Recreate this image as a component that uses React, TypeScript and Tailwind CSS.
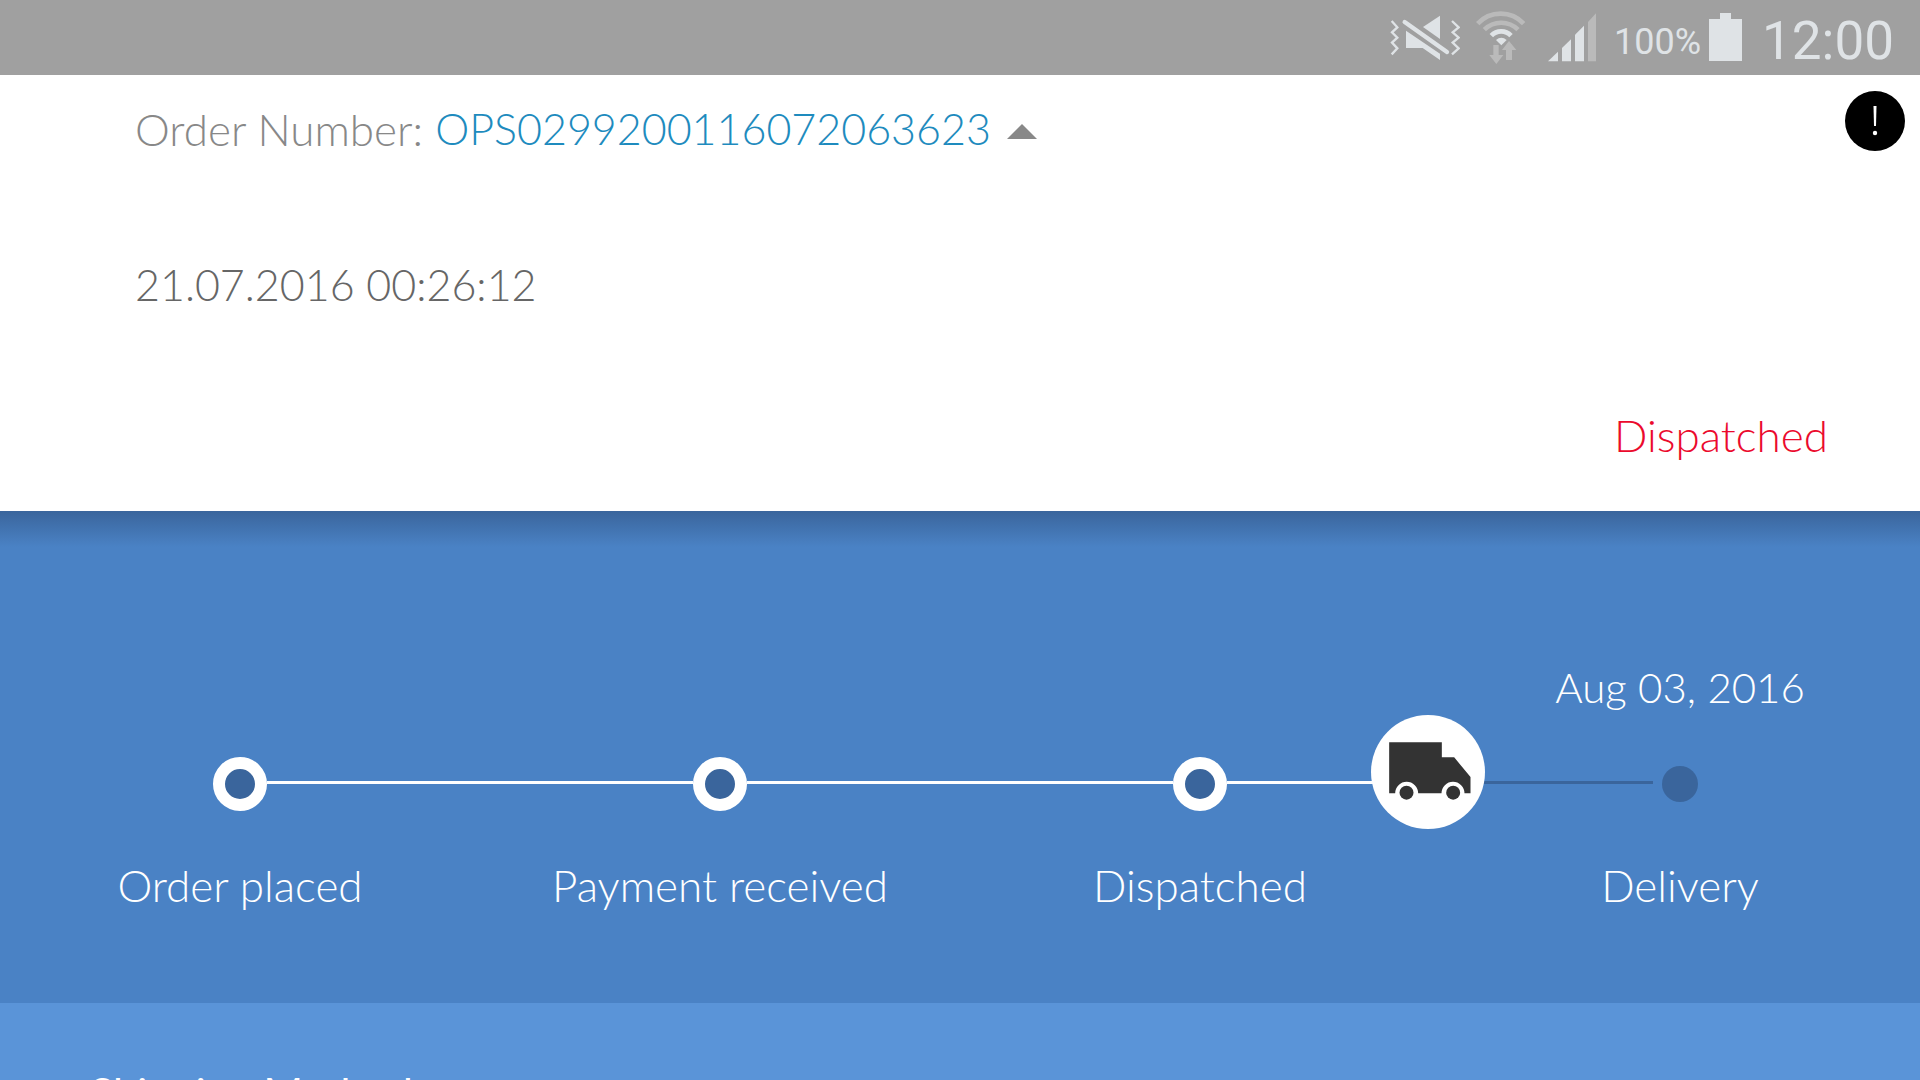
import React from "react";

const steps = [
  { label: "Order placed", date: "", state: "done" },
  { label: "Payment received", date: "", state: "done" },
  { label: "Dispatched", date: "", state: "done" },
  { label: "Delivery", date: "Aug 03, 2016", state: "pending" },
];

function MuteIcon() {
  return (
    <svg viewBox="60 45 210 138" className="h-[46px] w-[70px]" fill="#dfe3e6" aria-hidden="true">
      <g fill="none" stroke="#dfe3e6" strokeWidth="7">
        <path d="M65 63 82 82 66 97 82 113 66 128 82 145 65 163" />
        <path d="M246 63 266 82 248 97 266 113 248 128 266 145 246 163" />
      </g>
      <path d="M104 66 231 156" stroke="#dfe3e6" strokeWidth="13" strokeLinecap="round" />
      <path d="M159 81 210 47V117Z" />
      <path d="M108 92V144H158L210 180V161Z" />
    </svg>
  );
}

function WifiIcon() {
  return (
    <svg viewBox="315 30 150 165" className="h-[55px] w-[50px]" fill="none" aria-hidden="true">
      <g strokeWidth="14">
        <path d="M320 71A94 94 0 0 1 458 71" stroke="#bababa" />
        <path d="M340 89A72 72 0 0 1 441 89" stroke="#bababa" />
        <path d="M361 107A40 40 0 0 1 420 107" stroke="#dfe3e6" />
      </g>
      <path d="M375 120Q391 106 407 120L391 136Z" fill="#dfe3e6" />
      <path d="M367 135H383V165H397L376 192 355 165H367Z" fill="#bababa" />
      <path d="M414 123 436 150H423V180H405V150H393Z" fill="#bababa" />
    </svg>
  );
}

function SignalIcon() {
  return (
    <svg viewBox="534 41 144 147" className="h-[49px] w-[48px]" fill="#dfe3e6" aria-hidden="true">
      <path d="M534 186 564 157V186Z" />
      <path d="M576 186V146L603 120V186Z" />
      <path d="M615 186V106L642 79V186Z" />
      <path d="M654 186V68L678 42V186Z" fill="#bababa" />
    </svg>
  );
}

function BatteryIcon() {
  return (
    <svg viewBox="0 0 33 48" className="h-12 w-[33px]" fill="#dfe3e6" aria-hidden="true">
      <path d="M11 0H22V6H33V48H0V6H11Z" />
    </svg>
  );
}

function StatusBar() {
  return (
    <div className="flex h-[75px] shrink-0 items-center justify-end bg-[#a0a0a0] pr-[26px] font-[Roboto,sans-serif] leading-none font-normal text-[#dfe3e6]">
      <MuteIcon />
      <div className="ml-4">
        <WifiIcon />
      </div>
      <div className="mr-[18px] ml-[22px]">
        <SignalIcon />
      </div>
      <span className="pt-2 text-[36px]">100%</span>
      <div className="mr-5 mb-0.5 ml-2">
        <BatteryIcon />
      </div>
      <span className="pt-2 text-[53px]">12:00</span>
    </div>
  );
}

function TruckIcon() {
  return (
    <svg viewBox="147 275 245 174" className="h-[58px] w-[82px]" fill="#333333" aria-hidden="true">
      <path d="M147 276H305V321H342L391 380V429H373A34.500 34.500 0 0 0 304 429H234A34.500 34.500 0 0 0 165 429H147Z" />
      <circle cx="199" cy="427" r="21" />
      <circle cx="339" cy="427" r="21" />
    </svg>
  );
}

function OrderHeader() {
  return (
    <header className="shrink-0 bg-white pb-[46px]">
      <div className="flex h-[92px] items-start justify-between pt-4 pr-[15px] pl-[135px]">
        <h1 className="flex items-center leading-[76px] text-[#888888]">
          <span className="whitespace-pre">Order Number: </span>
          <a href="#order" className="text-[43px] text-[#1e8bbe]">
            OPS0299200116072063623
          </a>
          <button type="button" aria-label="Collapse order" className="ml-4 pt-1">
            <svg viewBox="0 0 30 15" className="h-[15px] w-[30px]" fill="#888888" aria-hidden="true">
              <path d="M0 15 15 0 30 15Z" />
            </svg>
          </button>
        </h1>
        <button
          type="button"
          aria-label="Report a problem"
          className="flex size-[60px] items-center justify-center rounded-full bg-black"
        >
          <svg viewBox="0 0 6 30" className="h-[30px] w-[6px]" fill="#ffffff" aria-hidden="true">
            <path d="M1.500 0H4.500L4 20H2Z" />
            <circle cx="3" cy="27" r="2.200" />
          </svg>
        </button>
      </div>
      <p className="mt-[88px] pl-[135px] text-[43px] leading-[60px] text-[#666666]">21.07.2016 00:26:12</p>
      <p className="mt-[90px] pr-[92px] text-right leading-[60px] text-[#eb0a2d]">Dispatched</p>
    </header>
  );
}

function Timeline() {
  return (
    <section className="shrink-0 bg-[#4a82c5] bg-[linear-gradient(#3a659c,#4a82c5_36px)] pt-[146px] pb-[88px] text-white">
      <ol className="relative grid grid-cols-4 leading-[60px]">
        {steps.map((step, i) => (
          <li key={step.label} className="flex flex-col items-center">
            <p className="h-[60px] text-[42px]">{step.date}</p>
            <div className="mt-[40px] flex h-[54px] w-full items-center">
              {step.state === "done" ? (
                <>
                  <span className={i === 0 ? "flex-1" : "mb-[3px] h-[3px] flex-1 bg-white"} />
                  <span className="size-[54px] rounded-full border-12 border-white bg-[#3a659c]" />
                  <span className="mb-[3px] h-[3px] flex-1 bg-white" />
                </>
              ) : (
                <>
                  <span className="mr-[9px] mb-[3px] h-[3px] flex-1 bg-[#3a659c]" />
                  <span className="mr-[9px] size-[36px] rounded-full bg-[#3a659c]" />
                  <span className="flex-1" />
                </>
              )}
            </div>
            <p className="mt-[44px]">{step.label}</p>
          </li>
        ))}
        <li
          aria-label="Parcel on its way"
          className="absolute top-[58px] left-[74.375%] flex size-[114px] -translate-x-1/2 items-center justify-center rounded-full bg-white pb-[3px] pl-[3px]"
        >
          <TruckIcon />
        </li>
      </ol>
    </section>
  );
}

export default function App() {
  return (
    <div className="flex h-screen flex-col overflow-hidden bg-[#5a94d8] font-[Lato,sans-serif] text-[44px] font-light">
      <StatusBar />
      <OrderHeader />
      <Timeline />
      <section className="px-[90px] pt-[60px]">
        <h2 className="text-[43px] leading-[60px] font-normal whitespace-nowrap text-white">Shipping Method</h2>
      </section>
    </div>
  );
}
